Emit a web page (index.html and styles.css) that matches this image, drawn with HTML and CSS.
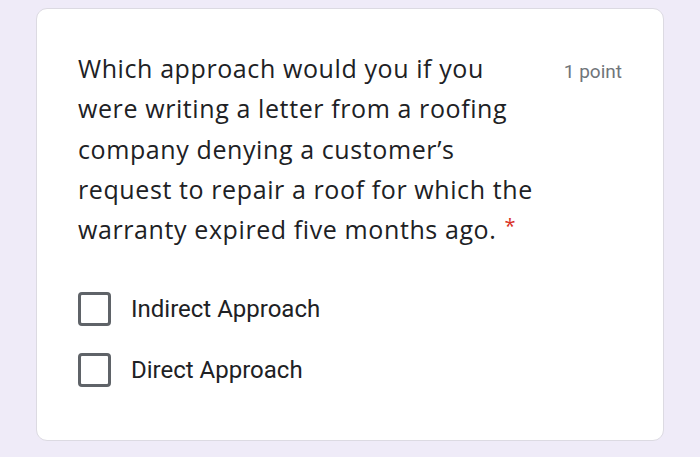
FILE: index.html
```html
<!DOCTYPE html>
<html>
<head>
<meta charset="utf-8">
<link rel="stylesheet" href="styles.css">
</head>
<body>
<div class="card">
  <div class="header">
    <div class="question">Which approach would you if you were writing a letter from a roofing company denying a customer’s request to repair a roof for which the warranty expired five months ago.<span class="req">*</span></div>
    <div class="points">1 point</div>
  </div>
  <div class="options">
    <label class="option"><span class="box"></span><span class="label">Indirect Approach</span></label>
    <label class="option"><span class="box"></span><span class="label">Direct Approach</span></label>
  </div>
</div>
</body>
</html>
```
FILE: styles.css
```css
html, body {
  margin: 0;
  padding: 0;
}
body {
  background: #efebf8;
  width: 700px;
  height: 457px;
  padding: 8px 36px 0 36px;
  box-sizing: border-box;
}
.card {
  background: #fff;
  border: 1px solid #dcdae2;
  border-radius: 11px;
  height: 433px;
  box-sizing: border-box;
  padding: 39px 41px 0 41px;
}
.header {
  display: flex;
  justify-content: space-between;
  align-items: flex-start;
}
.question {
  font-family: "Open Sans", sans-serif;
  font-size: 25px;
  line-height: 40.3px;
  color: #202124;
  width: 464px;
  letter-spacing: 0.6px;
}
.req {
  display: inline-block;
  color: #d93025;
  font-size: 20px;
  line-height: 20px;
  margin-left: 8px;
  vertical-align: 6px;
}
.points {
  font-family: Roboto, sans-serif;
  font-size: 19px;
  color: #70757a;
  margin-top: 12px;
}
.options {
  margin-top: 43px;
  display: flex;
  flex-direction: column;
  gap: 27px;
}
.option {
  display: flex;
  align-items: center;
  gap: 20px;
}
.box {
  width: 33px;
  height: 34px;
  box-sizing: border-box;
  border: 3px solid #5f6368;
  border-radius: 4px;
}
.label {
  font-family: Roboto, sans-serif;
  font-size: 24px;
  color: #202124;
}
```
